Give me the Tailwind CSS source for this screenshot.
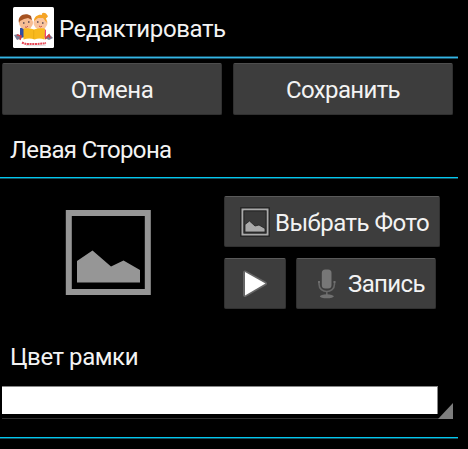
<!DOCTYPE html>
<html lang="ru">
<head>
<meta charset="utf-8">
<title>Редактировать</title>
<script src="https://cdn.jsdelivr.net/npm/@tailwindcss/browser@4"></script>
</head>
<body class="bg-black">
<main class="w-[468px] h-[449px] overflow-hidden bg-black text-[#f3f3f3] text-[24px] leading-[28px] font-['Roboto','Noto_Sans',sans-serif] whitespace-nowrap">
  <header class="flex h-[56px] pl-[13px]">
    <svg class="mt-[7px] w-[41px] h-[41px] shrink-0" viewBox="0 0 41 41">
      <rect width="41" height="41" rx="1.5" fill="#fff"/>
      <path d="M7 21l5-1 1 10-6 1z" fill="#304ca5"/>
      <path d="M29 20l4 3v8l-5-1z" fill="#e94580"/>
      <path d="M1 28l4-1 4 4-5 2zM32 31l4-4 4 4-4 2z" fill="#777b94"/>
      <path d="M4 28l4 1-1 4M32 32l4-4 1 3" stroke="#d83c43" stroke-width="1.5" fill="none"/>
      <ellipse cx="13" cy="16" rx="7" ry="6.5" fill="#f7bd94"/>
      <ellipse cx="27.5" cy="16" rx="7" ry="6.5" fill="#f9c49e"/>
      <path d="M6 16C4 8 13 5 18 9l1 4-4-2-4 1-4 2z" fill="#a65220"/>
      <path d="M21 14c0-5 5-7 8-6-1-3 4-3 5 0 2 1 0 3-1 3l1 5-4-5-5 0z" fill="#f5a425"/>
      <path d="M10 16h1.5M15 15h1.5M24 15h1.5M29 16h1.5" stroke="#574652" stroke-width="1.3"/>
      <path d="M12 20q2 1 3-1M26 19q2 2 3 0" stroke="#cc5550" fill="none"/>
      <path d="M10.500 21.500q5-1 10.500 1 5-2 11-1l-.5 11q-5-2-10 0-5-2-11 0z" fill="#f8b91e"/>
      <path d="M20.700 23v9" stroke="#e0a010" stroke-width=".6"/>
      <path d="M9 35.500q4 2 9 1.500 8 .3 15-1" stroke="#e54856" stroke-width="2" stroke-dasharray="2 .6" fill="none"/>
      <path d="M13 38.500q10 .8 20-.3" stroke="#dedede" fill="none"/>
    </svg>
    <h1 class="mt-[15px] ml-[5px] tracking-[-0.4px]">Редактировать</h1>
  </header>
  <div class="w-[458px] h-[3px] bg-[#33b5e5] border-y border-[#175066]"></div>

  <div class="flex gap-[11px] pl-[2px] mt-[4px]">
    <button class="w-[220px] h-[52px] rounded-[2px] bg-[#3d3d3d] border border-[#303030] border-t-[#4e4e4e] pt-[2px] tracking-[-0.5px]">Отмена</button>
    <button class="w-[220px] h-[52px] rounded-[2px] bg-[#3d3d3d] border border-[#303030] border-t-[#4e4e4e] pt-[2px] tracking-[-0.65px]">Сохранить</button>
  </div>

  <h2 class="h-[62px] pt-[21px] pl-[10px] tracking-[-0.66px]">Левая Сторона</h2>
  <div class="w-[458px] h-[2px] bg-[#00c8f0] border-b border-[#155260]"></div>

  <section class="flex h-[150px]">
    <div class="w-[224px] pl-[65px] pt-[30px]">
      <svg class="w-[87px] h-[87px]" viewBox="0 0 87 87">
        <rect x="3.800" y="4" width="79" height="79" fill="none" stroke="#969696" stroke-width="6"/>
        <path d="M12 52L27.500 41.500 46 57.500 58.500 51.500 75 61V73.500H12z" fill="#969696"/>
      </svg>
    </div>
    <div class="flex flex-col gap-[11px] pt-[17px]">
      <button class="flex w-[216px] h-[51px] items-center rounded-[2px] bg-[#3d3d3d] border border-[#303030] border-t-[#5a5a5a] pl-[15px] pt-[3px]">
        <svg class="w-[30px] h-[30px] shrink-0 -mt-[2px]" viewBox="0 0 30 30">
          <rect x="1" y="1" width="28" height="28" fill="#3a3a3a" stroke="#222" stroke-width="1.6"/>
          <rect x="2.500" y="2.500" width="25" height="25" fill="none" stroke="#aaa" stroke-width="2"/>
          <rect x="4" y="4" width="22" height="22" fill="none" stroke="#242424"/>
          <path d="M5 17.500L9.500 14 15 19l4-1 6 3.500V25H5z" fill="#aaa" stroke="#222" stroke-width=".8"/>
        </svg>
        <span class="ml-[5px] tracking-[-0.5px]">Выбрать Фото</span>
      </button>
      <div class="flex gap-[10px]">
        <button class="flex w-[62px] h-[51px] rounded-[2px] bg-[#3d3d3d] border border-[#303030] border-t-[#5a5a5a] pl-[17px] pt-[10px]">
          <svg class="w-[26px] h-[30px]" viewBox="0 0 26 30">
            <path d="M3 3.500L23 14.500 3 26z" fill="#666" stroke="#666" stroke-width="4" stroke-linejoin="round"/>
            <path d="M3 3L23.500 14.500 3 26.500z" fill="#fff"/>
          </svg>
        </button>
        <button class="flex w-[140px] h-[51px] items-center rounded-[2px] bg-[#3d3d3d] border border-[#303030] border-t-[#5a5a5a] pl-[20px] pt-[1px]">
          <svg class="w-[20px] h-[30px] shrink-0" viewBox="0 0 20 30">
            <rect x="4.800" y=".5" width="9.700" height="19" rx="3.500" fill="#777"/>
            <path d="M2 12v3c0 10 15.500 10 15.500 0v-3M9.800 22v5" stroke="#686868" stroke-width="1.600" fill="none"/>
            <path d="M1 13h2M16.500 13h2" stroke="#747474" stroke-width="1.500"/>
            <ellipse cx="9.800" cy="27.300" rx="7" ry="2" fill="#707070"/>
          </svg>
          <span class="ml-[11px] tracking-[-0.6px]">Запись</span>
        </button>
      </div>
    </div>
  </section>

  <h2 class="h-[57px] pt-[14px] pl-[10px] tracking-[-0.45px]">Цвет рамки</h2>
  <div class="flex ml-[2px] w-[451px] h-[33px] border-b border-[#303030]">
    <div class="w-[436px] h-[28px] bg-white border-t border-r border-[#888]"></div>
    <svg class="w-[15px] h-[16px] mt-[17px] shrink-0" viewBox="0 0 15 16"><path d="M15 0V16H0z" fill="#7d7d7d"/></svg>
  </div>
  <div class="mt-[18px] w-[458px] h-[2px] bg-[#00c8f0] border-b border-[#155260]"></div>
</main>
</body>
</html>
